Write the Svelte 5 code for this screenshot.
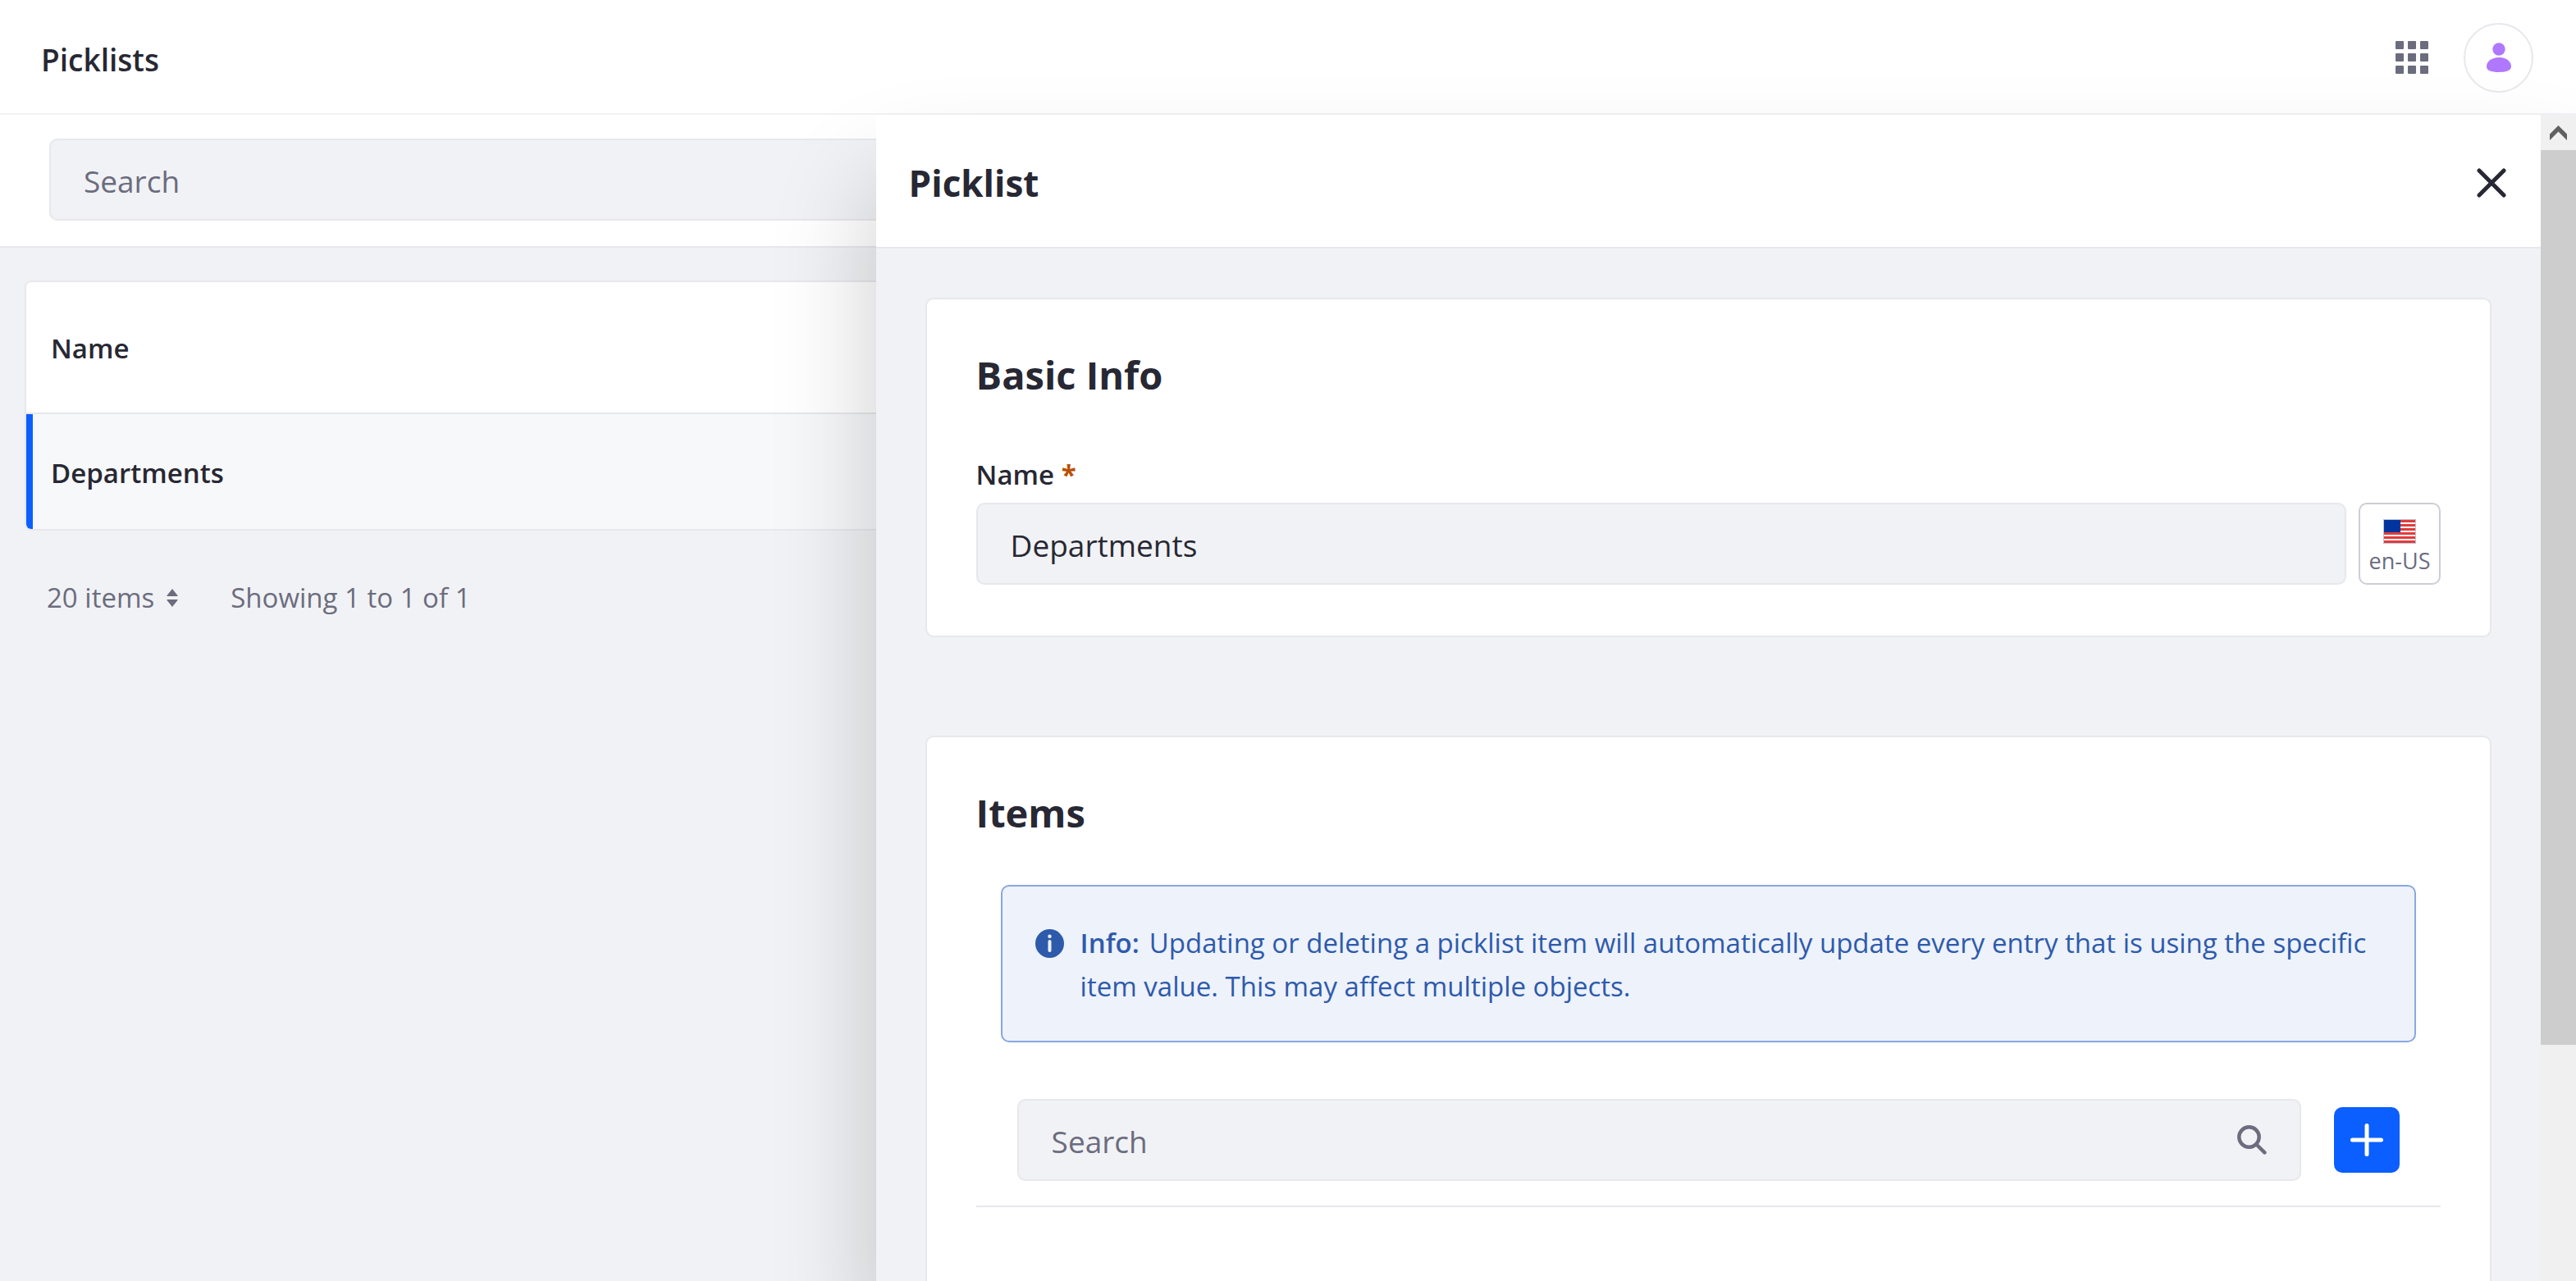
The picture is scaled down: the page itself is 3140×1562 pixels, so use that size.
<script>
  let search = $state('');
  let itemSearch = $state('');
  let name = $state('Departments');
  const cells = [0, 15, 30];
  const stripes = [0, 1, 2, 3, 4, 5];
</script>

<div class="app">
  <header class="topbar">
    <h1>Picklists</h1>
    <div class="actions">
      <button class="plain" aria-label="Applications">
        <svg width="40" height="40" viewBox="0 0 40 40" fill="#6b6c7e">
          {#each cells as y}
            {#each cells as x}
              <rect {x} {y} width="10" height="10" rx="1" />
            {/each}
          {/each}
        </svg>
      </button>
      <button class="avatar" aria-label="User menu">
        <svg width="30" height="36" viewBox="0 0 30 36" fill="#af78ff">
          <circle cx="15" cy="8" r="7.7" />
          <path d="M15 18c9 0 15 5 15 11 0 5-6 7-15 7S0 34 0 29c0-6 6-11 15-11z" />
        </svg>
      </button>
    </div>
  </header>

  <div class="workspace">
    <main>
      <div class="toolbar">
        <input class="field" type="text" placeholder="Search" aria-label="Search picklists" bind:value={search} />
      </div>
      <div class="listing">
        <div class="table-frame">
          <table>
            <thead>
              <tr><th scope="col">Name</th></tr>
            </thead>
            <tbody>
              <tr><td>Departments</td></tr>
            </tbody>
          </table>
        </div>
        <div class="pagination">
          <button class="plain per-page">
            20 items
            <svg width="14" height="22" viewBox="0 0 14 22" fill="#6b6c7e">
              <path d="M7 0l6.600 8.200q.4.8-.6.8H1q-1 0-.6-.8zM7 22l6.600-8.200q.4-.8-.6-.8H1q-1 0-.6.8z" />
            </svg>
          </button>
          <span>Showing 1 to 1 of 1</span>
        </div>
      </div>
    </main>

    <aside class="panel" aria-label="Picklist">
      <div class="panel-main">
        <div class="panel-head">
          <h2>Picklist</h2>
          <button class="plain" aria-label="Close">
            <svg width="36" height="36" viewBox="0 0 36 36" fill="none" stroke="#272833" stroke-width="5" stroke-linecap="round">
              <path d="M3 3l30 30M33 3L3 33" />
            </svg>
          </button>
        </div>
        <div class="panel-body">
          <section class="card">
            <h2>Basic Info</h2>
            <label for="picklist-name">Name <span class="required">*</span></label>
            <div class="name-row">
              <input id="picklist-name" class="field" type="text" bind:value={name} />
              <button class="locale">
                <svg width="40" height="30" viewBox="0 0 40 30">
                  <rect width="40" height="30" fill="#b9c6d3" />
                  <rect x="1" y="1" width="38" height="28" fill="#fff" />
                  {#each stripes as i}
                    <rect x="1" y={1 + i * 5} width="38" height="3" fill="#e23b3b" />
                  {/each}
                  <rect x="1" y="1" width="20" height="15" fill="#0035a0" />
                </svg>
                <span>en-US</span>
              </button>
            </div>
          </section>

          <section class="card items">
            <h2>Items</h2>
            <div class="alert" role="status">
              <svg width="35" height="35" viewBox="0 0 35 35">
                <circle cx="17.5" cy="17.5" r="17.5" fill="#2e5aac" />
                <circle cx="17.5" cy="8.8" r="2.2" fill="#edf2fb" />
                <rect x="15.5" y="13" width="4" height="15" rx="2" fill="#edf2fb" />
              </svg>
              <p>
                <strong>Info:</strong>Updating or deleting a picklist item will automatically update every entry that is using the specific item value. This may affect multiple objects.
              </p>
            </div>
            <div class="item-tools">
              <div class="field search-box">
                <input type="text" placeholder="Search" aria-label="Search items" bind:value={itemSearch} />
                <button class="plain" aria-label="Search">
                  <svg width="36" height="36" viewBox="0 0 36 36" fill="none" stroke="#6b6c7e" stroke-width="4.4" stroke-linecap="round">
                    <circle cx="14.5" cy="14.5" r="12.2" />
                    <path d="M24 24l9.400 9.400" />
                  </svg>
                </button>
              </div>
              <button class="add" aria-label="Add item">
                <svg width="40" height="40" viewBox="0 0 40 40" fill="none" stroke="#fff" stroke-width="5" stroke-linecap="round">
                  <path d="M20 2.500v35M2.500 20h35" />
                </svg>
              </button>
            </div>
          </section>
        </div>
      </div>
      <div class="scrollbar">
        <button class="plain scroll-up" aria-label="Scroll up" tabindex="-1">
          <svg width="21" height="18" viewBox="0 0 21 18" fill="#606060">
            <path d="M10.500 0L21 10.500V18L10.500 7.500 0 18v-7.500z" />
          </svg>
        </button>
        <div class="thumb"></div>
      </div>
    </aside>
  </div>
</div>

<style>
  :global(body) {
    margin: 0;
  }
  .app,
  .app * {
    box-sizing: border-box;
  }
  .app {
    display: flex;
    flex-direction: column;
    height: 100vh;
    overflow: hidden;
    background: #f1f2f5;
    color: #272833;
    font-family: 'Open Sans', 'Noto Sans', sans-serif;
    font-size: 33px;
    line-height: 53px;
  }
  h1,
  h2,
  p {
    margin: 0;
  }
  button,
  input {
    font: inherit;
    color: inherit;
    margin: 0;
    padding: 0;
    border: 0;
    outline: 0;
  }
  svg {
    display: block;
    flex: none;
  }
  .plain {
    background: none;
  }
  .topbar {
    display: flex;
    align-items: center;
    justify-content: space-between;
    height: 140px;
    flex: none;
    padding: 2px 52px 0 50px;
    border-bottom: 2px solid #f1f2f5;
    background: #fff;
  }
  h1 {
    padding-top: 4px;
    font-size: 37px;
    font-weight: 600;
  }
  .actions {
    display: flex;
    align-items: center;
    gap: 43px;
  }
  .avatar {
    display: grid;
    place-items: center;
    width: 85px;
    height: 85px;
    border: 2px solid #e7e7ed;
    border-radius: 50%;
    background: #fff;
  }
  .workspace {
    position: relative;
    flex: 1;
    min-height: 0;
  }
  .toolbar {
    padding: 29px 60px 31px;
    border-bottom: 2px solid #e7e7ed;
    background: #fff;
  }
  .field {
    display: block;
    width: 100%;
    height: 100px;
    padding: 2px 40px 0;
    border: 2px solid #e7e7ed;
    border-radius: 10px;
    background: #f1f2f5;
    font-size: 37px;
  }
  input::placeholder {
    color: #6b6c7e;
    opacity: 1;
  }
  .listing {
    padding: 40px 30px;
  }
  .table-frame {
    overflow: hidden;
    border: 2px solid #e7e7ed;
    border-radius: 8px;
  }
  table {
    width: 100%;
    border-spacing: 0;
  }
  th,
  td {
    padding: 2px 30px 0;
    text-align: left;
    font-weight: 600;
  }
  th {
    height: 161px;
    border-bottom: 2px solid #e7e7ed;
    background: #fff;
  }
  td {
    height: 140px;
    background: #f7f8f9;
    box-shadow: inset 8px 0 #0b5fff;
  }
  .pagination {
    display: flex;
    gap: 64px;
    padding: 55px 27px;
    color: #6b6c7e;
  }
  .per-page {
    display: flex;
    align-items: center;
    gap: 15px;
  }
  .panel {
    position: absolute;
    top: 0;
    right: 0;
    bottom: 0;
    display: flex;
    width: 66%;
    background: #f1f2f5;
    box-shadow: 0 80px 120px rgba(0, 0, 0, 0.2);
  }
  .panel-main {
    flex: 1;
    min-width: 0;
    overflow: hidden;
  }
  .panel-head {
    display: flex;
    align-items: center;
    justify-content: space-between;
    height: 163px;
    padding: 4px 42px 0 40px;
    border-bottom: 2px solid #e7e7ed;
    background: #fff;
  }
  h2 {
    font-size: 47px;
    font-weight: 700;
    line-height: 60px;
  }
  .panel-head h2 {
    font-size: 44px;
  }
  .panel-body {
    display: grid;
    gap: 120px;
    padding: 60px;
  }
  .card {
    padding: 62px 60px;
    border: 2px solid #e7e7ed;
    border-radius: 10px;
    background: #fff;
  }
  label {
    display: block;
    margin: 65px 0 8px;
    font-weight: 600;
  }
  .required {
    color: #b95000;
    font-weight: 700;
  }
  .name-row {
    display: flex;
    gap: 15px;
  }
  .name-row .field {
    flex: 1;
    min-width: 0;
  }
  .locale {
    display: flex;
    flex-direction: column;
    align-items: center;
    justify-content: center;
    gap: 5px;
    width: 100px;
    height: 100px;
    padding-top: 6px;
    border: 2px solid #cdcdd9;
    border-radius: 10px;
    background: #fff;
    color: #6b6c7e;
    font-size: 27px;
    line-height: 32px;
  }
  .items {
    min-height: 760px;
  }
  .alert {
    display: flex;
    gap: 20px;
    margin: 58px 30px 0;
    padding: 42px 40px 40px;
    border: 2px solid #89a7e0;
    border-radius: 10px;
    background: #edf2fb;
    color: #2e5aac;
  }
  .alert svg {
    margin-top: 10px;
  }
  .alert strong {
    margin-right: 12px;
    font-weight: 600;
  }
  .item-tools {
    display: flex;
    align-items: center;
    gap: 40px;
    margin-top: 39px;
    padding: 30px 50px;
    border-bottom: 2px solid #e7e7ed;
  }
  .search-box {
    display: flex;
    align-items: center;
    flex: 1;
    padding-top: 0;
  }
  .search-box input {
    flex: 1;
    min-width: 0;
    height: 100%;
    padding-top: 2px;
    background: none;
  }
  .add {
    display: grid;
    place-items: center;
    width: 80px;
    height: 80px;
    border-radius: 10px;
    background: #0b5fff;
  }
  .scrollbar {
    flex: none;
    width: 43px;
    background: #f0f0f0;
  }
  .scroll-up {
    display: grid;
    place-items: center;
    width: 100%;
    height: 43px;
  }
  .thumb {
    height: 76.7%;
    background: #cdcdcd;
  }
</style>
